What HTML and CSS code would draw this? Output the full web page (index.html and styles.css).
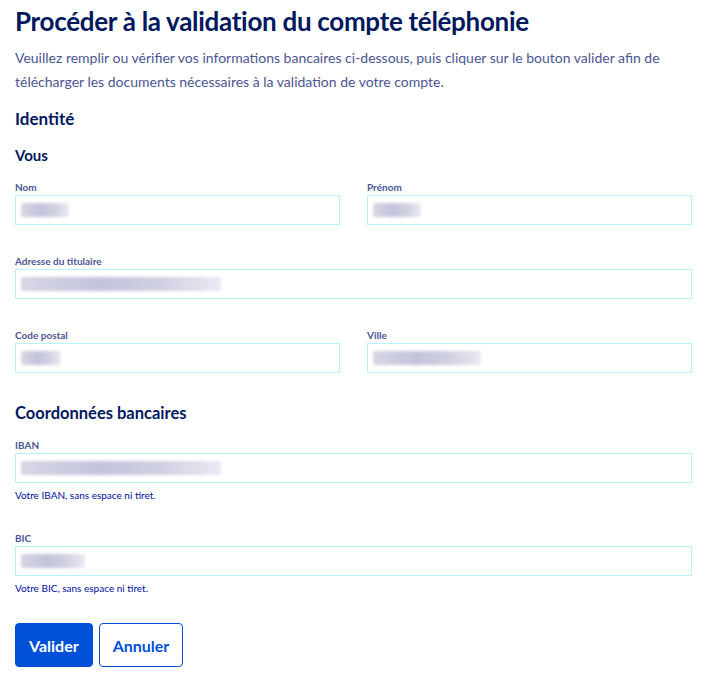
FILE: index.html
```html
<!DOCTYPE html>
<html lang="fr">
<head>
<meta charset="utf-8">
<title>Validation du compte téléphonie</title>
<link rel="stylesheet" href="styles.css">
</head>
<body>
<main class="page">
  <h1 class="title">Procéder à la validation du compte téléphonie</h1>
  <p class="intro">Veuillez remplir ou vérifier vos informations bancaires ci-dessous, puis cliquer sur le bouton valider afin de télécharger les documents nécessaires à la validation de votre compte.</p>

  <h2 class="section">Identité</h2>
  <h3 class="subsection">Vous</h3>

  <div class="row two">
    <div class="field">
      <label class="label">Nom</label>
      <div class="input"><span class="blur w48"></span></div>
    </div>
    <div class="field">
      <label class="label">Prénom</label>
      <div class="input"><span class="blur w48"></span></div>
    </div>
  </div>

  <div class="row">
    <div class="field">
      <label class="label">Adresse du titulaire</label>
      <div class="input"><span class="blur w200"></span></div>
    </div>
  </div>

  <div class="row two">
    <div class="field">
      <label class="label">Code postal</label>
      <div class="input"><span class="blur w40"></span></div>
    </div>
    <div class="field">
      <label class="label">Ville</label>
      <div class="input"><span class="blur w108"></span></div>
    </div>
  </div>

  <h2 class="section bank">Coordonnées bancaires</h2>

  <div class="row">
    <div class="field">
      <label class="label">IBAN</label>
      <div class="input"><span class="blur w200"></span></div>
      <p class="help">Votre IBAN, sans espace ni tiret.</p>
    </div>
  </div>

  <div class="row">
    <div class="field">
      <label class="label">BIC</label>
      <div class="input"><span class="blur w64"></span></div>
      <p class="help">Votre BIC, sans espace ni tiret.</p>
    </div>
  </div>

  <div class="actions">
    <button class="btn primary">Valider</button>
    <button class="btn secondary">Annuler</button>
  </div>
</main>
</body>
</html>
```

FILE: styles.css
```css
* { box-sizing: border-box; }
html, body { margin: 0; padding: 0; background: #fff; }
body { font-family: Lato, "Noto Sans", sans-serif; color: #4d5592; }
.page { padding: 4px 10px 0 15px; }
.title { margin: 0; font-size: 26px; line-height: 34px; font-weight: 700; letter-spacing: -0.3px; color: #00185e; }
.intro { margin: 8px 0 0; font-size: 14px; line-height: 24px; color: #4d5592; }
.section { margin: 13px 0 0; font-size: 17px; line-height: 24px; font-weight: 700; color: #00185e; }
.subsection { margin: 13px 0 0; font-size: 15px; line-height: 22px; font-weight: 700; color: #00185e; }
.bank { margin-top: 28px; font-size: 16.5px; }
.row { display: grid; grid-template-columns: 1fr; column-gap: 27px; margin-top: 15px; }
.row.two { grid-template-columns: 1fr 1fr; }
.row + .row { margin-top: 30px; }
.section + .row { margin-top: 14px; }
.field { display: flex; flex-direction: column; }
.label { font-size: 10px; line-height: 12px; font-weight: 700; color: #4d5592; margin-bottom: 2px; }
.input { height: 30px; border: 1px solid #b9f1fc; display: flex; align-items: center; padding: 0 5px; }
.blur { display: block; height: 14px; border-radius: 2px; background: linear-gradient(90deg, #d6d6e6, #c3c3da 40%, #d0d0e2 70%, #eaeaf3); filter: blur(1.5px); }
.w40 { width: 40px; } .w48 { width: 48px; } .w64 { width: 64px; } .w108 { width: 108px; } .w200 { width: 200px; }
.help { margin: 5px 0 0; font-size: 10px; line-height: 14px; color: #000e9c; }
.actions { display: flex; gap: 6px; margin-top: 28px; }
.btn { font-family: inherit; font-size: 16px; font-weight: 700; height: 44px; border-radius: 4px; padding: 0 13px; cursor: pointer; }
.primary { background: #0050d7; color: #fff; border: 1px solid #0050d7; }
.secondary { background: #fff; color: #0050d7; border: 1px solid #0050d7; }
```
